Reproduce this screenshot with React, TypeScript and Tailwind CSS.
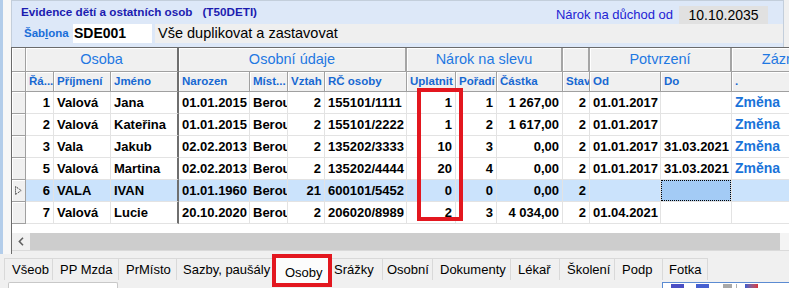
import React from 'react';

interface Col {
    key: string;
    w: string;
    label: string;
    right?: boolean;
    sep?: boolean;
}

interface Row {
    [key: string]: string;
}

const cols: Col[] = [
    { key: 'ra', w: 'w-[28px]', label: 'Řá...', right: true },
    { key: 'pr', w: 'w-[57px]', label: 'Příjmení' },
    { key: 'jm', w: 'w-[68px]', label: 'Jméno', sep: true },
    { key: 'na', w: 'w-[71px]', label: 'Narozen' },
    { key: 'mi', w: 'w-[38px]', label: 'Míst...' },
    { key: 'vz', w: 'w-[37px]', label: 'Vztah', right: true },
    { key: 'rc', w: 'w-[82px]', label: 'RČ osoby' },
    { key: 'up', w: 'w-[49px]', label: 'Uplatnit', right: true },
    { key: 'po', w: 'w-[41px]', label: 'Pořadí', right: true },
    { key: 'ca', w: 'w-[66px]', label: 'Částka', right: true },
    { key: 'st', w: 'w-[27px]', label: 'Stav', right: true },
    { key: 'od', w: 'w-[71px]', label: 'Od' },
    { key: 'do', w: 'w-[71px]', label: 'Do' },
    { key: 'za', w: 'w-[114px]', label: '.' },
];

const groups = [
    { label: 'Osoba', w: 'w-[153px]', sep: true },
    { label: 'Osobní údaje', w: 'w-[228px]' },
    { label: 'Nárok na slevu', w: 'w-[156px]' },
    { label: '', w: 'w-[27px]' },
    { label: 'Potvrzení', w: 'w-[142px]' },
    { label: 'Záznam', w: 'w-[114px]' },
];

const rows: Row[] = [
    { ra: '1', pr: 'Valová', jm: 'Jana', na: '01.01.2015', mi: 'Beroun', vz: '2', rc: '155101/1111', up: '1', po: '1', ca: '1 267,00', st: '2', od: '01.01.2017', do: '', za: 'Změna' },
    { ra: '2', pr: 'Valová', jm: 'Kateřina', na: '01.01.2015', mi: 'Beroun', vz: '2', rc: '155101/2222', up: '1', po: '2', ca: '1 617,00', st: '2', od: '01.01.2017', do: '', za: 'Změna' },
    { ra: '3', pr: 'Vala', jm: 'Jakub', na: '02.02.2013', mi: 'Beroun', vz: '2', rc: '135202/3333', up: '10', po: '3', ca: '0,00', st: '2', od: '01.01.2017', do: '31.03.2021', za: 'Změna' },
    { ra: '5', pr: 'Valová', jm: 'Martina', na: '02.02.2013', mi: 'Beroun', vz: '2', rc: '135202/4444', up: '20', po: '4', ca: '0,00', st: '2', od: '01.01.2017', do: '31.03.2021', za: 'Změna' },
    { ra: '6', pr: 'VALA', jm: 'IVAN', na: '01.01.1960', mi: 'Beroun', vz: '21', rc: '600101/5452', up: '0', po: '0', ca: '0,00', st: '2', od: '', do: '', za: '', sel: '1' },
    { ra: '7', pr: 'Valová', jm: 'Lucie', na: '20.10.2020', mi: 'Beroun', vz: '2', rc: '206020/8989', up: '2', po: '3', ca: '4 034,00', st: '2', od: '01.04.2021', do: '', za: '' },
];

const tabs = [
    { t: 'Všeob', w: 'w-[49px]', pl: 'pl-[7px]', first: true },
    { t: 'PP Mzda', w: 'w-[66px]', pl: 'pl-[7px]' },
    { t: 'PrMísto', w: 'w-[58px]', pl: 'pl-[7px]' },
    { t: 'Sazby, paušály', w: 'w-[97px]', pl: 'pl-[6px]' },
    { t: 'Osoby', w: 'w-[56px]', pl: 'pl-[10px]', active: true },
    { t: 'Srážky', w: 'w-[53px]', pl: 'pl-[4px]' },
    { t: 'Osobní', w: 'w-[50px]', pl: 'pl-[4px]' },
    { t: 'Dokumenty', w: 'w-[78px]', pl: 'pl-[7px]' },
    { t: 'Lékař', w: 'w-[49px]', pl: 'pl-[7px]' },
    { t: 'Školení', w: 'w-[55px]', pl: 'pl-[7px]' },
    { t: 'Podp', w: 'w-[48px]', pl: 'pl-[7px]' },
    { t: 'Fotka', w: 'w-[45px]', pl: 'pl-[6px]' },
];

function Indicator({ children, h }: { children?: React.ReactNode; h: string }) {
    return (
        <div className={`w-[14px] ${h} shrink-0 bg-[#f0f0f0] border-r border-b border-[#a0a0a0] shadow-[inset_1px_1px_0_#ffffff] flex items-center justify-center`}>
            {children}
        </div>
    );
}

export default function App() {
    return (
        <div className="w-[789px] h-[288px] overflow-hidden relative bg-[#f0f0f0] font-['Liberation_Sans',Arial,sans-serif] text-black">
            <div className="flex h-[254px]">
                <div className="w-[3px] bg-[#b3cdea]" />
                <div className="w-[8px] bg-[#f7f7f7]" />
                <div className="flex-1 min-w-0 flex flex-col">
                    {/* header panel */}
                    <div className="h-[47px] flex shrink-0">
                        <div className="w-[773px] h-full border-l border-t border-r border-[#c3cedb] bg-[#dde8f8] flex flex-col">
                            <div className="h-[23px] flex">
                                <div className="pl-[9px] pt-[4px] flex gap-[10px] text-[11.7px] leading-[14px] font-bold text-[#1c1cb0] whitespace-nowrap">
                                    <span>Evidence dětí a ostatních osob</span>
                                    <span>(T50DETI)</span>
                                </div>
                                <div className="ml-auto flex items-start pt-[5px] pr-[15px]">
                                    <span className="text-[13px] leading-[15px] mt-[1px] text-[#2323d4] mr-[6px] whitespace-nowrap">Nárok na důchod od</span>
                                    <div className="w-[89px] h-[18px] bg-[#e1e1e1] text-[14px] leading-[16px] flex items-center justify-center">10.10.2035</div>
                                </div>
                            </div>
                            <div className="h-[19px] flex items-center">
                                <span className="pl-[12px] w-[61px] text-[11.5px] font-bold text-[#1a6ed8] whitespace-nowrap">
                                    Šab<span className="underline">l</span>ona
                                </span>
                                <div className="w-[79px] h-full bg-white flex items-center pl-[1px] text-[14px] font-bold">SDE001</div>
                                <div className="flex-1 ml-[3px] h-full bg-[#efefef] flex items-center pl-[3px] text-[14.5px] whitespace-nowrap">Vše duplikovat a zastavovat</div>
                            </div>
                        </div>
                        <div className="flex-1 bg-[#f0f0f0]" />
                    </div>

                    {/* grid */}
                    <div className="flex-1 border-t border-l border-[#6b6b6b] bg-white flex flex-col overflow-hidden">
                        {/* group header */}
                        <div className="h-[24px] flex shrink-0 bg-[#f0f0f0]">
                            <Indicator h="h-full" />
                            {groups.map((g, i) => (
                                <div
                                    key={i}
                                    className={`${g.w} shrink-0 h-full flex items-center justify-center overflow-hidden whitespace-nowrap text-[14.5px] text-[#1f78e2] border-b border-b-[#a0a0a0] shadow-[inset_1px_1px_0_#ffffff] ${g.sep ? 'border-r-2 border-r-[#6f6f6f]' : 'border-r-2 border-r-[#a5a5a5]'}`}
                                >
                                    {g.label}
                                </div>
                            ))}
                        </div>
                        {/* column header */}
                        <div className="h-[20px] flex shrink-0 bg-[#f0f0f0]">
                            <Indicator h="h-full" />
                            {cols.map((c) => (
                                <div
                                    key={c.key}
                                    className={`${c.w} shrink-0 h-full flex items-center pl-[3px] overflow-hidden whitespace-nowrap text-[11.5px] font-bold text-[#1768d2] border-b border-b-[#a0a0a0] shadow-[inset_1px_1px_0_#ffffff] ${c.sep ? 'border-r-2 border-r-[#6f6f6f]' : 'border-r border-r-[#a0a0a0]'}`}
                                >
                                    {c.label}
                                </div>
                            ))}
                        </div>
                        {/* rows */}
                        {rows.map((r, ri) => (
                            <div key={ri} className={`h-[22px] flex shrink-0 ${r.sel ? 'bg-[#cbe3fc]' : 'bg-white'}`}>
                                <Indicator h="h-full">
                                    {r.sel && (
                                        <svg width="7" height="9" viewBox="0 0 7 9">
                                            <path d="M0.5 0.5 L6.2 4.5 L0.5 8.5 Z" fill="none" stroke="#111" strokeWidth="1" strokeDasharray="1 1" />
                                        </svg>
                                    )}
                                </Indicator>
                                {cols.map((c) => {
                                    const focus = r.sel && c.key === 'do';
                                    return (
                                        <div
                                            key={c.key}
                                            className={`${c.w} shrink-0 h-full border-b border-b-[#e3e3e3] ${c.sep ? 'border-r-2 border-r-[#6f6f6f]' : 'border-r border-r-[#e3e3e3]'}`}
                                        >
                                            <div
                                                className={`w-full h-full flex items-center overflow-hidden whitespace-nowrap font-bold ${c.key === 'za' ? 'text-[14px] text-[#1a73d9]' : 'text-[13px]'} ${c.right ? 'justify-end pr-[3px]' : 'pl-[3px]'} ${focus ? 'bg-[#a3cbf5] border border-dotted border-black' : ''}`}
                                            >
                                                {r[c.key]}
                                            </div>
                                        </div>
                                    );
                                })}
                            </div>
                        ))}
                        <div className="h-[9px] shrink-0" />
                        {/* horizontal scrollbar */}
                        <div className="h-[17px] flex shrink-0 bg-[#f0f0f0]">
                            <div className="w-[18px] h-full flex items-center justify-center">
                                <svg width="6" height="9" viewBox="0 0 6 9">
                                    <path d="M5 0.8 L1.4 4.5 L5 8.2" fill="none" stroke="#606060" strokeWidth="1.6" />
                                </svg>
                            </div>
                            <div className="w-[750px] h-full bg-[#cdcdcd]" />
                            <div className="flex-1 h-full bg-[#f4f4f4]" />
                        </div>
                        <div className="h-[4px] shrink-0 bg-[#f0f0f0] border-t border-[#dadada]" />
                    </div>
                </div>
            </div>

            {/* tabs */}
            <div className="h-[28px] flex items-start pl-[4px]">
                {tabs.map((t) => (
                    <div
                        key={t.t}
                        className={
                            t.active
                                ? `${t.w} ${t.pl} shrink-0 mt-[1px] h-[28px] pt-[9px] bg-[#fcfcfc] border-l border-r border-t border-[#c9c9c9] text-[13px] leading-[15px] whitespace-nowrap relative z-10`
                                : `${t.w} ${t.pl} shrink-0 mt-[4px] h-[22px] flex items-center bg-[#f0f0f0] border-t border-r border-[#d9d9d9] ${t.first ? 'border-l' : ''} text-[13px] whitespace-nowrap`
                        }
                    >
                        {t.t}
                    </div>
                ))}
            </div>

            {/* bottom strip */}
            <div className="h-[6px] flex">
                <div className="ml-[8px] w-[110px] h-full bg-white border-t border-l border-r border-[#c8c8c8] rounded-t-[2px]" />
                <div className="ml-auto w-[127px] h-full bg-white border-t border-l border-[#5b8bd2] flex items-start pt-[1px] pl-[8px] gap-[4px]">
                    <div className="w-[13px] h-[4px] bg-[#4a4fc4]" />
                    <div className="w-[4px]" />
                    <div className="w-[13px] h-[4px] bg-[#4660d0]" />
                    <div className="w-[6px]" />
                    <div className="w-[9px] h-[4px] bg-[#a8a8a8]" />
                    <div className="w-[5px] h-[5px] border-l border-[#b0b0b0]" />
                    <div className="w-[13px] h-[4px] bg-gradient-to-r from-[#3b5bcc] to-[#d8303a]" />
                </div>
            </div>

            {/* red highlight boxes */}
            <div className="absolute left-[417px] top-[88px] w-[46px] h-[133px] border-4 border-[#e3171f] pointer-events-none" />
            <div className="absolute left-[272px] top-[254px] w-[60px] h-[33px] border-4 border-[#e3171f] pointer-events-none z-20" />
        </div>
    );
}
